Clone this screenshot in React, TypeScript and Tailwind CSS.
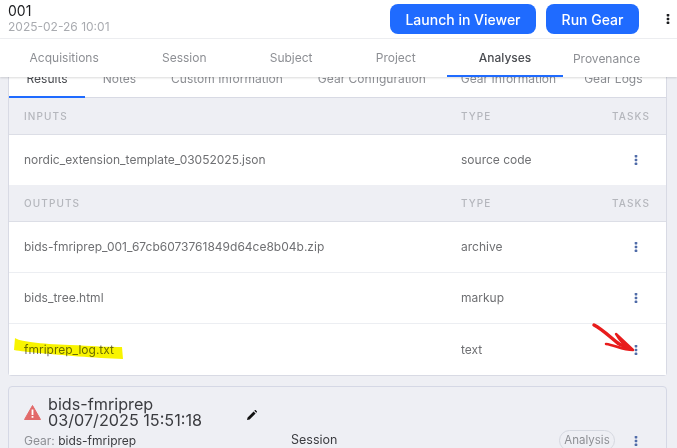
const tabs = ['Acquisitions', 'Session', 'Subject', 'Project', 'Analyses'];
const subTabs = ['Results', 'Notes', 'Custom Information', 'Gear Configuration', 'Gear Information', 'Gear Logs'];

function Kebab({ className = 'text-[#4f6ba8]' }: { className?: string }) {
  return (
    <svg width="4" height="10" viewBox="0 0 4 10" className={className} fill="currentColor">
      <rect x="0.7" y="0" width="2.6" height="2.4" rx="0.6" />
      <rect x="0.7" y="3.8" width="2.6" height="2.4" rx="0.6" />
      <rect x="0.7" y="7.6" width="2.6" height="2.4" rx="0.6" />
    </svg>
  );
}

function SectionHead({ label }: { label: string }) {
  return (
    <div className="flex h-[37px] items-center border-b border-[#dcdee6] bg-[#eeeff4] pt-px text-[10px] font-medium tracking-[1.1px] text-[#b4b6bc]">
      <span className="w-[452px] pl-[15px]">{label}</span>
      <span className="w-[114px]">TYPE</span>
      <span className="w-[75px] text-right">TASKS</span>
    </div>
  );
}

function FileRow({ name, type, border = true, tall = true }: { name: string; type: string; border?: boolean; tall?: boolean }) {
  return (
    <div className={`flex items-center bg-white text-[12px] text-[#6f7073] ${tall ? 'h-[51px]' : 'h-[50px]'} ${border ? 'border-b border-[#eceef2]' : ''}`}>
      <span className="w-[452px] pl-[15px]">{name}</span>
      <span className="w-[173px]">{type}</span>
      <Kebab />
    </div>
  );
}

export default function App() {
  return (
    <div className="relative h-[448px] w-[677px] overflow-hidden bg-[#eeeff4] font-['Inter',sans-serif]">
      {/* Header */}
      <div className="flex h-[39px] items-center border-b border-[#eeeff2] bg-white pl-2">
        <div className="flex-1 leading-none">
          <div className="text-[14px] leading-[16px] text-[#1b1c1f]">001</div>
          <div className="text-[12px] leading-[16px] text-[#a9abb0]">2025-02-26 10:01</div>
        </div>
        <div className="flex gap-[10px]">
          <button className="h-[30px] w-[146px] rounded-lg bg-[#1f6bff] text-[14px] font-medium text-white">Launch in Viewer</button>
          <button className="h-[30px] w-[93px] rounded-lg bg-[#1f6bff] text-[14px] font-medium text-white">Run Gear</button>
        </div>
        <div className="flex w-[38px] justify-end pr-[7px]">
          <Kebab className="text-[#1b1c1f]" />
        </div>
      </div>

      {/* Main tabs */}
      <div className="relative z-10 flex h-[38px] bg-white shadow-[0_1px_2px_rgba(0,0,0,0.15)]">
        {tabs.map(t => (
          <div
            key={t}
            className={`flex items-center border-b-[2px] px-[31.6px] pt-[2px] text-[12px] first:ml-[-2px] ${t === 'Analyses' ? 'border-[#1f6bff] font-medium text-[#4b4d52]' : 'border-transparent text-[#8d8f94]'}`}
          >
            {t}
          </div>
        ))}
        <div className="flex items-center pl-[10px] pt-[2px] text-[12px] text-[#8d8f94]">Provenance</div>
      </div>

      {/* Results panel */}
      <div className="mx-2 w-[659px] rounded-b border-x border-b border-[#d8dae4]">
        <div className="flex h-[21px] border-b border-[#d8dae4] bg-white">
          {subTabs.map(t => (
            <div
              key={t}
              className={`flex h-[21px] overflow-hidden border-b-[2px] px-[17.5px] text-[12px] leading-[12px] last:ml-[-7px] ${t === 'Results' ? 'border-[#1f6bff] text-[#4b4d52]' : 'border-transparent text-[#8d8f94]'}`}
            >
              <span className="-mt-[4px] whitespace-nowrap">{t}</span>
            </div>
          ))}
        </div>
        <SectionHead label="INPUTS" />
        <FileRow name="nordic_extension_template_03052025.json" type="source code" border={false} tall={false} />
        <SectionHead label="OUTPUTS" />
        <FileRow name="bids-fmriprep_001_67cb6073761849d64ce8b04b.zip" type="archive" />
        <FileRow name="bids_tree.html" type="markup" />
        <FileRow name="fmriprep_log.txt" type="text" border={false} />
      </div>

      {/* Analysis card */}
      <div className="mx-2 mt-[10px] h-[70px] w-[659px] rounded border border-[#d5d8e5] bg-[#eeeff4]">
        <div className="flex pt-[9px]">
          <div className="flex w-[39px] justify-end pt-[9px] pr-[7px]">
            <svg width="17" height="15" viewBox="0 0 17 15">
              <path d="M8.5 0.5 L16.5 14.5 L0.5 14.5 Z" fill="#e26a6a" stroke="#e26a6a" strokeLinejoin="round" />
              <rect x="7.6" y="4.5" width="1.8" height="5.5" fill="#fff" />
              <rect x="7.6" y="11" width="1.8" height="1.8" fill="#fff" />
            </svg>
          </div>
          <div className="w-[199px] text-[16.2px] leading-[16px] text-[#3b3c40]">
            bids-fmriprep
            <br />
            03/07/2025 15:51:18
          </div>
          <svg width="10" height="10" viewBox="0 0 10 10" className="mt-[14px]" fill="#111">
            <path d="M0 10 L0.6 7.4 L6.6 1.4 L8.6 3.4 L2.6 9.4 Z M7.3 0.7 L8 0 Q8.3 -0.2 8.6 0 L10 1.4 Q10.2 1.7 10 2 L9.3 2.7 Z" />
          </svg>
        </div>
        <div className="flex items-center pt-[2px] text-[12.5px]">
          <div className="w-[282px] pl-[15px] text-[12px] text-[#8d8f94]">
            Gear: <span className="text-[#3b3c40]">bids-fmriprep</span>
          </div>
          <span className="w-[268px] text-[#3b3c40]">Session</span>
          <span className="flex h-[21px] w-[56px] items-center justify-center rounded-[11px] border border-[#d5d8e0] text-[11.5px] text-[#8d8f94]">Analysis</span>
          <span className="ml-[19px]">
            <Kebab />
          </span>
        </div>
      </div>

      {/* Hand-drawn annotations */}
      <svg className="pointer-events-none absolute left-0 top-0 z-20 mix-blend-multiply" width="677" height="448" viewBox="0 0 677 448">
        <path d="M15 338 C18 341 40 344 70 345 C90 346 110 347 122 347 L123 359 C95 358 60 355 40 353 C28 352 20 351 14 350 Z" fill="#f8f400" />
      </svg>
      <svg className="pointer-events-none absolute left-0 top-0 z-20" width="677" height="448" viewBox="0 0 677 448">
        <path d="M594 325 C602 329 610 337 619 344 L631 349" fill="none" stroke="#e81c1c" strokeWidth="3.5" strokeLinecap="round" />
        <path d="M606 344 C615 345 622 350 633 350 L616 334 C620 341 625 346 629 348" fill="#e81c1c" stroke="#e81c1c" strokeWidth="2.5" strokeLinejoin="round" strokeLinecap="round" />
      </svg>
    </div>
  );
}
